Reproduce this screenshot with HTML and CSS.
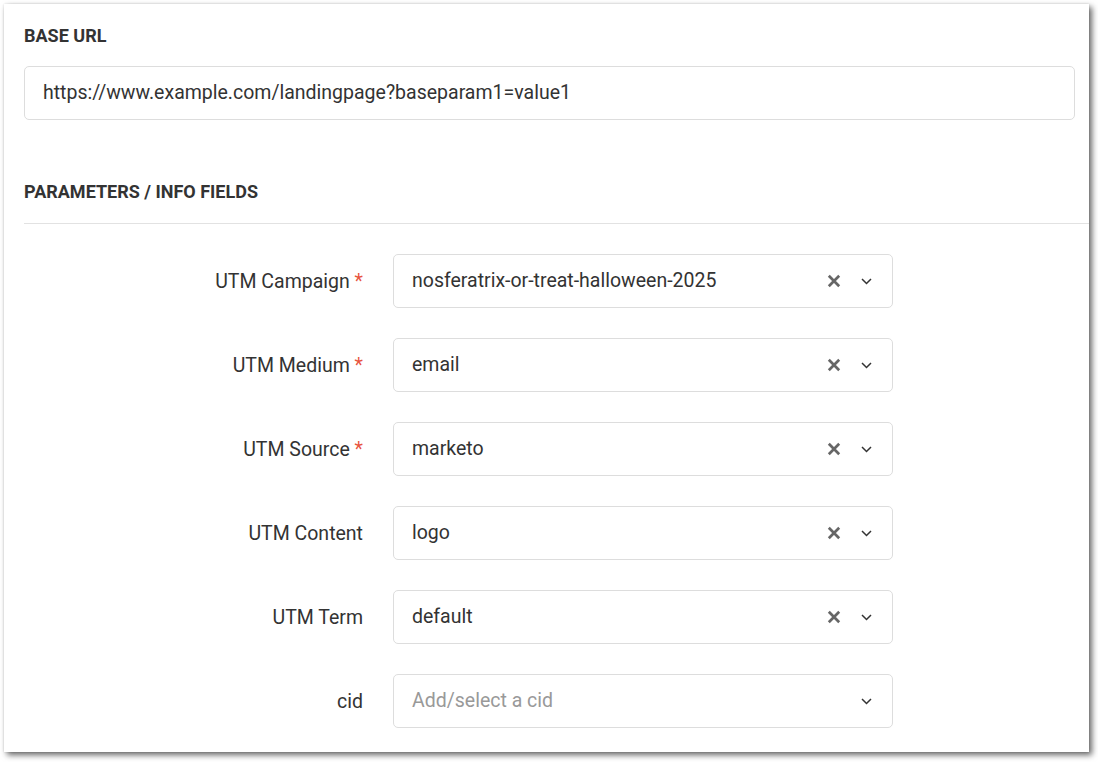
FILE: index.html
```html
<!DOCTYPE html>
<html lang="en">
<head>
<meta charset="utf-8">
<title>UTM Builder</title>
<link rel="stylesheet" href="styles.css">
</head>
<body>
<div class="card">
  <section class="base">
    <h2 class="section-title">BASE URL</h2>
    <div class="text-input">https://www.example.com/landingpage?baseparam1=value1</div>
  </section>
  <h2 class="section-title params-title">PARAMETERS / INFO FIELDS</h2>
  <div class="fields">
    <label class="field-label">UTM Campaign <span class="req">*</span></label>
    <div class="select"><span class="value">nosferatrix-or-treat-halloween-2025</span>
      <span class="clear"><svg width="14" height="14" viewBox="0 0 14 14"><path d="M1.8 1.8L12.2 12.2M12.2 1.8L1.8 12.2" stroke="#666" stroke-width="2.7"/></svg></span>
      <span class="chev"><svg width="11" height="7" viewBox="0 0 11 7"><path d="M1 1L5.5 5.5L10 1" fill="none" stroke="#333" stroke-width="1.5"/></svg></span>
    </div>

    <label class="field-label">UTM Medium <span class="req">*</span></label>
    <div class="select"><span class="value">email</span>
      <span class="clear"><svg width="14" height="14" viewBox="0 0 14 14"><path d="M1.8 1.8L12.2 12.2M12.2 1.8L1.8 12.2" stroke="#666" stroke-width="2.7"/></svg></span>
      <span class="chev"><svg width="11" height="7" viewBox="0 0 11 7"><path d="M1 1L5.5 5.5L10 1" fill="none" stroke="#333" stroke-width="1.5"/></svg></span>
    </div>

    <label class="field-label">UTM Source <span class="req">*</span></label>
    <div class="select"><span class="value">marketo</span>
      <span class="clear"><svg width="14" height="14" viewBox="0 0 14 14"><path d="M1.8 1.8L12.2 12.2M12.2 1.8L1.8 12.2" stroke="#666" stroke-width="2.7"/></svg></span>
      <span class="chev"><svg width="11" height="7" viewBox="0 0 11 7"><path d="M1 1L5.5 5.5L10 1" fill="none" stroke="#333" stroke-width="1.5"/></svg></span>
    </div>

    <label class="field-label">UTM Content</label>
    <div class="select"><span class="value">logo</span>
      <span class="clear"><svg width="14" height="14" viewBox="0 0 14 14"><path d="M1.8 1.8L12.2 12.2M12.2 1.8L1.8 12.2" stroke="#666" stroke-width="2.7"/></svg></span>
      <span class="chev"><svg width="11" height="7" viewBox="0 0 11 7"><path d="M1 1L5.5 5.5L10 1" fill="none" stroke="#333" stroke-width="1.5"/></svg></span>
    </div>

    <label class="field-label">UTM Term</label>
    <div class="select"><span class="value">default</span>
      <span class="clear"><svg width="14" height="14" viewBox="0 0 14 14"><path d="M1.8 1.8L12.2 12.2M12.2 1.8L1.8 12.2" stroke="#666" stroke-width="2.7"/></svg></span>
      <span class="chev"><svg width="11" height="7" viewBox="0 0 11 7"><path d="M1 1L5.5 5.5L10 1" fill="none" stroke="#333" stroke-width="1.5"/></svg></span>
    </div>

    <label class="field-label">cid</label>
    <div class="select"><span class="value placeholder">Add/select a cid</span>
      <span class="chev"><svg width="11" height="7" viewBox="0 0 11 7"><path d="M1 1L5.5 5.5L10 1" fill="none" stroke="#333" stroke-width="1.5"/></svg></span>
    </div>
  </div>
</div>
</body>
</html>
```

FILE: styles.css
```css
* { box-sizing: border-box; }
html, body { margin: 0; padding: 0; background: #fff; }
body {
  font-family: Roboto, "Liberation Sans", Arial, sans-serif;
  color: #333;
  padding: 4px 0 0 4px;
  height: 762px;
  overflow: hidden;
}
.card {
  width: 1085px;
  height: 748px;
  background: #fff;
  box-shadow: 3px 3px 6px rgba(0,0,0,0.6), 0 0 2px rgba(0,0,0,0.12);
  padding: 20px 0 24px 20px;
}
.base { margin-right: 14px; }
.section-title {
  margin: 0;
  font-size: 18px;
  line-height: 24px;
  font-weight: 700;
  color: #333;
}
.text-input {
  margin-top: 18px;
  height: 54px;
  border: 1px solid #ddd;
  border-radius: 5px;
  padding: 0 18px 1px;
  display: flex;
  align-items: center;
  font-size: 19.5px;
}
.params-title {
  margin-top: 60px;
  padding-bottom: 19px;
  border-bottom: 1px solid #e2e2e2;
}
.fields {
  display: grid;
  grid-template-columns: 339px 500px;
  column-gap: 30px;
  row-gap: 30px;
  margin-top: 30px;
  align-items: center;
}
.field-label {
  text-align: right;
  font-size: 19.5px;
  color: #333;
}
.req { color: #e8553f; }
.select {
  height: 54px;
  border: 1px solid #ddd;
  border-radius: 5px;
  padding: 0 18px;
  display: flex;
  align-items: center;
  font-size: 19.5px;
}
.value { flex: 1; padding-bottom: 1px; }
.placeholder { color: #999; }
.clear { display: flex; width: 14px; margin-right: 20px; }
.chev { display: flex; width: 11px; margin-right: 2px; }
```
